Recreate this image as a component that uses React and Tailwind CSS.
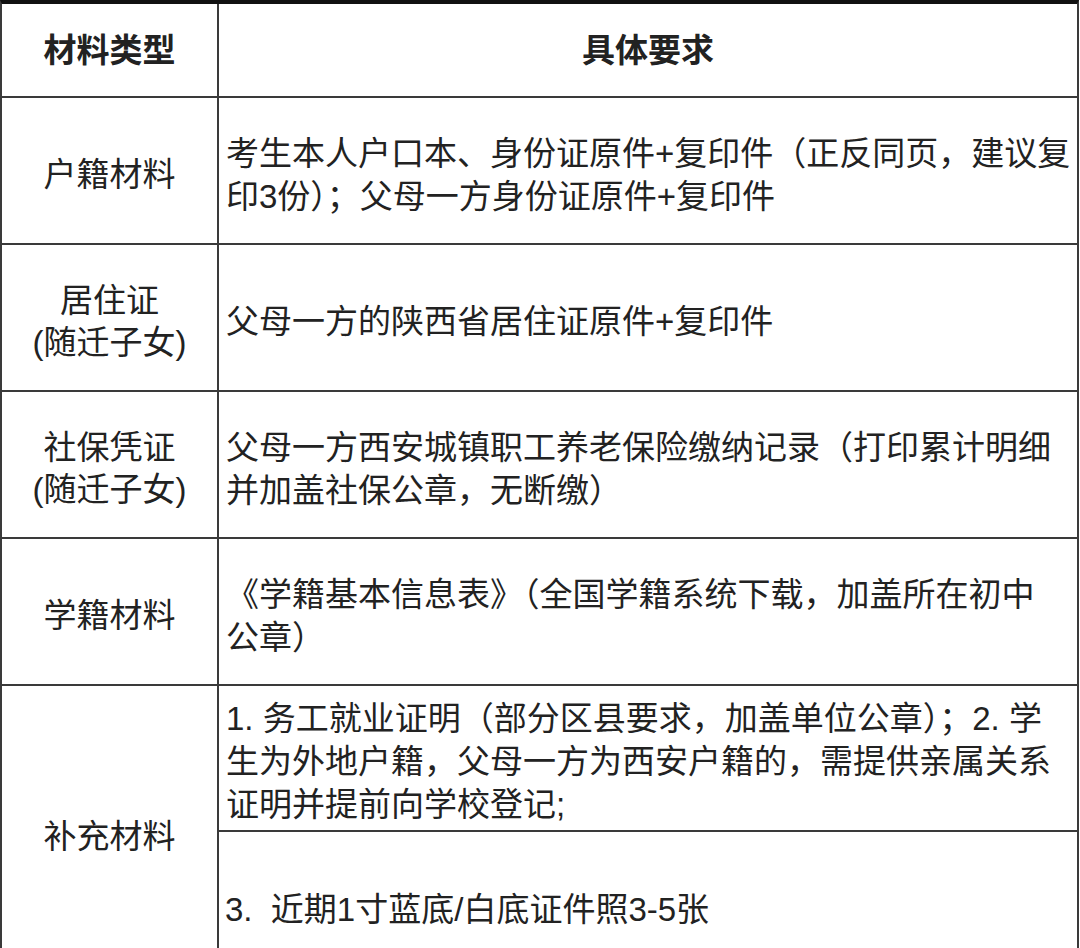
const rows = [
  { label: ['户籍材料'], lines: ['考生本人户口本、身份证原件+复印件（正反同页，建议复', '印3份）；父母一方身份证原件+复印件'] },
  { label: ['居住证', '(随迁子女)'], lines: ['父母一方的陕西省居住证原件+复印件'] },
  { label: ['社保凭证', '(随迁子女)'], lines: ['父母一方西安城镇职工养老保险缴纳记录（打印累计明细', '并加盖社保公章，无断缴）'] },
  { label: ['学籍材料'], lines: ['《学籍基本信息表》（全国学籍系统下载，加盖所在初中', '公章）'] },
]

function Lines({ lines }) {
  return (
    <div className="flex flex-col">
      {lines.map((l, i) => (
        <span key={i} className="block whitespace-nowrap leading-[43px]">{l}</span>
      ))}
    </div>
  )
}

export default function App() {
  return (
    <div
      className="w-[1080px] h-[948px] overflow-hidden bg-white text-[#222] text-[33px]"
      style={{ fontFamily: '"Liberation Sans", "Noto Sans CJK SC", sans-serif' }}
    >
      <div className="w-[1079px] border-t-4 border-t-[#111] border-x-2 border-x-[#3a3a3a]">
        {/* header */}
        <div className="grid grid-cols-[217px_1fr] h-[94px] border-b-2 border-[#3a3a3a] font-bold">
          <div className="flex items-center justify-center border-r-2 border-[#3a3a3a] pt-[2px]">材料类型</div>
          <div className="flex items-center justify-center pt-[2px]">具体要求</div>
        </div>

        {rows.map((r, i) => (
          <div key={i} className="grid grid-cols-[217px_1fr] h-[147px] border-b-2 border-[#3a3a3a]">
            <div className="flex flex-col items-center justify-center border-r-2 border-[#3a3a3a] pt-[8px]">
              {r.label.map((t, j) => (
                <span key={j} className="leading-[42px]">{t}</span>
              ))}
            </div>
            <div className="flex items-center pl-[7px] pt-[8px]">
              <Lines lines={r.lines} />
            </div>
          </div>
        ))}

        {/* supplementary */}
        <div className="grid grid-cols-[217px_1fr] h-[300px]">
          <div className="flex items-center justify-center border-r-2 border-[#3a3a3a] pt-[2px]">补充材料</div>
          <div className="flex flex-col">
            <div className="flex items-center h-[146px] pl-[7px] pt-[6px] border-b-2 border-[#3a3a3a]">
              <Lines
                lines={[
                  '1. 务工就业证明（部分区县要求，加盖单位公章）；2. 学',
                  '生为外地户籍，父母一方为西安户籍的，需提供亲属关系',
                  '证明并提前向学校登记;',
                ]}
              />
            </div>
            <div className="flex items-center flex-1 pl-[6px]">
              <Lines lines={['3.\u00a0\u00a0近期1寸蓝底/白底证件照3-5张']} />
            </div>
          </div>
        </div>
      </div>
    </div>
  )
}
